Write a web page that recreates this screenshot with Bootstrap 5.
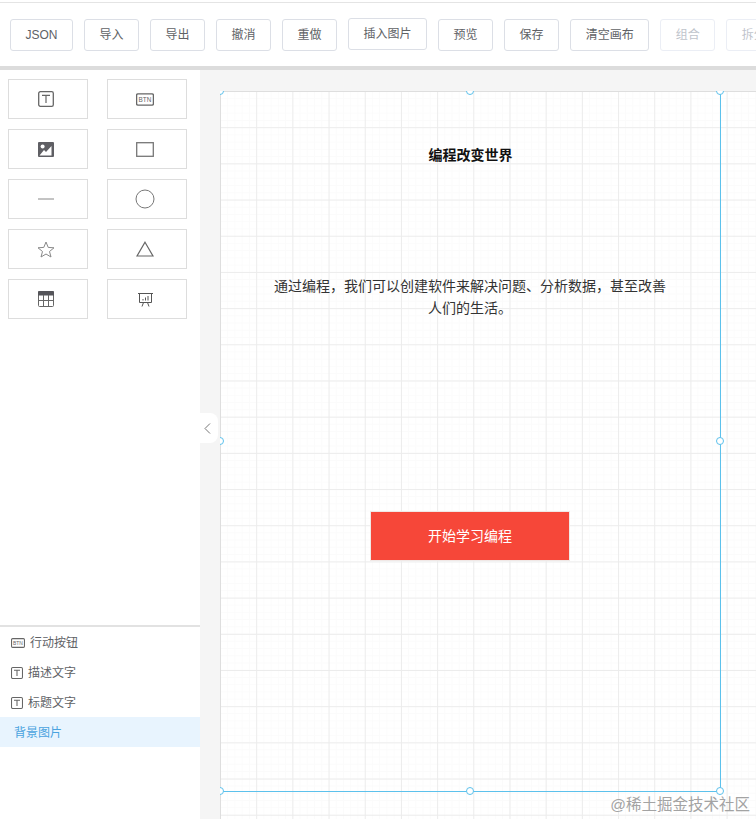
<!DOCTYPE html>
<html lang="zh-CN">
<head>
  <meta charset="UTF-8">
  <title>画布编辑器</title>
  <link href="https://cdn.jsdelivr.net/npm/bootstrap@5.3.0/dist/css/bootstrap.min.css" rel="stylesheet">
  <style>
    html, body {
      height: 100%;
    }
    body {
      overflow: hidden;
      font-family: "Liberation Sans", "Noto Sans CJK SC", sans-serif;
      font-size: 12px;
      color: #606266;
    }
    .top-bar {
      height: 70px;
      padding: 19px 0 0 10px;
      gap: 11px;
      background: linear-gradient(#e4e4e4, #e4e4e4) 0 2px / 100% 1px no-repeat #fff;
      border-bottom: 4px solid #dcdcdc;
      overflow: hidden;
    }
    .top-bar .btn {
      flex: none;
      height: 32px;
      padding: 1px 14.5px 0;
      font-size: 12px;
      line-height: 29px;
      color: #606266;
      background: #fff;
      border: 1px solid #dcdfe6;
      border-radius: 3px;
    }
    .top-bar .btn:disabled {
      color: #c0c4cc;
      border-color: #ebeef5;
      opacity: 1;
    }
    .top-bar .btn.btn-up {
      margin-top: -1px;
    }
    .main-row {
      height: 749px;
    }
    .side-panel {
      width: 200px;
      flex: none;
      background: #fff;
    }
    .shape-grid {
      display: grid;
      grid-template-columns: 80px 80px;
      grid-auto-rows: 40px;
      column-gap: 19px;
      row-gap: 10px;
      padding: 9px 0 0 8px;
    }
    .shape-cell {
      border: 1px solid #ddd;
      padding-right: 4px;
    }
    .shape-cell svg, .layer-row svg {
      color: #666;
    }
    .layer-list {
      border-top: 2px solid #e2e2e2;
      padding-bottom: 72px;
    }
    .layer-row {
      height: 30px;
      padding: 1px 0 0 11px;
      font-size: 12px;
      color: #606266;
      gap: 5px;
    }
    .layer-row.is-active {
      padding-left: 14px;
      background: #e8f4fe;
      color: #4aa3df;
    }
    .work-area {
      position: relative;
      background: #f5f5f5;
      padding: 21px 0 0 20px;
      overflow: hidden;
    }
    .side-toggle {
      position: absolute;
      left: 0;
      top: 343px;
      width: 18px;
      height: 30px;
      padding-right: 4px;
      background: #fff;
      border-radius: 0 8px 8px 0;
    }
    .sheet {
      position: relative;
      width: 640px;
      height: 800px;
      overflow: hidden;
      background-color: #fff;
      background-image:
        linear-gradient(to right, #ececec 1px, transparent 1px),
        linear-gradient(to bottom, #ececec 1px, transparent 1px),
        linear-gradient(to right, #fbfbfb 1px, transparent 1px),
        linear-gradient(to bottom, #fbfbfb 1px, transparent 1px);
      background-size: 36.2px 36.2px, 36.2px 36.2px, 7.24px 7.24px, 7.24px 7.24px;
      box-shadow: inset 1px 1px 0 #dedede;
    }
    .sel-right {
      position: absolute;
      left: 500px;
      top: 0;
      width: 1px;
      height: 700px;
      background: #5cc1ec;
    }
    .sel-bottom {
      position: absolute;
      left: 0;
      top: 700px;
      width: 501px;
      height: 1px;
      background: #5cc1ec;
    }
    .sel-dot {
      position: absolute;
      width: 8px;
      height: 8px;
      margin: -4px 0 0 -4px;
      background: #fff;
      border: 1px solid #5cc1ec;
      border-radius: 50%;
    }
    .sheet-title {
      position: absolute;
      left: 0;
      top: 53px;
      width: 501px;
      text-align: center;
      font-size: 14px;
      line-height: 22px;
      font-weight: 700;
      color: #111;
    }
    .sheet-desc {
      position: absolute;
      left: 50px;
      top: 184px;
      width: 400px;
      text-align: center;
      font-size: 14px;
      line-height: 22px;
      color: #333;
    }
    .sheet-btn {
      position: absolute;
      left: 151px;
      top: 421px;
      width: 198px;
      height: 48px;
      font-size: 14px;
      background: #f64739;
      color: #fff;
      box-shadow: 0 0 0 1px #f0e8e6;
    }
    .watermark {
      position: absolute;
      right: 6px;
      bottom: 3px;
      font-size: 15.5px;
      line-height: 22px;
      color: #a3a3a3;
    }
  </style>
</head>
<body>
  <!-- toolbar -->
  <div class="top-bar d-flex align-items-start">
    <button class="btn" type="button">JSON</button>
    <button class="btn" type="button">导入</button>
    <button class="btn" type="button">导出</button>
    <button class="btn" type="button">撤消</button>
    <button class="btn" type="button">重做</button>
    <button class="btn btn-up" type="button">插入图片</button>
    <button class="btn" type="button">预览</button>
    <button class="btn" type="button">保存</button>
    <button class="btn" type="button">清空画布</button>
    <button class="btn" type="button" disabled>组合</button>
    <button class="btn" type="button" disabled>拆分</button>
  </div>

  <div class="main-row d-flex">
    <!-- left panel -->
    <div class="side-panel d-flex flex-column justify-content-between">
      <div class="shape-grid">
        <div class="shape-cell d-flex align-items-center justify-content-center">
          <svg width="16" height="16" viewBox="0 0 16 16">
            <rect x="0.7" y="0.7" width="14.6" height="14.6" rx="1.6" fill="none" stroke="currentColor" stroke-width="1.3"/>
            <path d="M4 4.3h8M8 4.3v7.6" fill="none" stroke="currentColor" stroke-width="1.2"/>
          </svg>
        </div>
        <div class="shape-cell d-flex align-items-center justify-content-center">
          <svg width="18" height="13" viewBox="0 0 18 13">
            <rect x="0.6" y="0.8" width="16.8" height="11.4" rx="1.4" fill="none" stroke="currentColor" stroke-width="1.3"/>
            <text x="9" y="9.2" text-anchor="middle" font-size="6.4" font-family="Liberation Sans, sans-serif" fill="currentColor">BTN</text>
          </svg>
        </div>
        <div class="shape-cell d-flex align-items-center justify-content-center">
          <svg width="16" height="15" viewBox="0 0 16 15">
            <rect width="16" height="15" rx="1" fill="#5f5f64"/>
            <circle cx="4.6" cy="4.6" r="2" fill="#fff"/>
            <path d="M1.5 13.5 L6 8 L8 10 L13.5 4 V13.5 Z" fill="#fff"/>
          </svg>
        </div>
        <div class="shape-cell d-flex align-items-center justify-content-center">
          <svg width="18" height="15" viewBox="0 0 18 15"><rect x="0.7" y="0.7" width="16.6" height="13.6" fill="none" stroke="#777" stroke-width="1.3"/></svg>
        </div>
        <div class="shape-cell d-flex align-items-center justify-content-center">
          <svg width="16" height="2" viewBox="0 0 16 2"><path d="M0 1h16" stroke="#888" stroke-width="1"/></svg>
        </div>
        <div class="shape-cell d-flex align-items-center justify-content-center">
          <svg width="20" height="20" viewBox="0 0 20 20"><circle cx="10" cy="10" r="9" fill="none" stroke="#777" stroke-width="1"/></svg>
        </div>
        <div class="shape-cell d-flex align-items-center justify-content-center">
          <svg width="18" height="17" viewBox="0 0 18 17"><path d="M9 1 L11.2 6.4 L17 6.8 L12.5 10.5 L14 16 L9 13 L4 16 L5.5 10.5 L1 6.8 L6.8 6.4 Z" fill="none" stroke="#888" stroke-width="1"/></svg>
        </div>
        <div class="shape-cell d-flex align-items-center justify-content-center">
          <svg width="18" height="16" viewBox="0 0 18 16"><path d="M9 1.2 L17 15 H1 Z" fill="none" stroke="#666" stroke-width="1.2"/></svg>
        </div>
        <div class="shape-cell d-flex align-items-center justify-content-center">
          <svg width="16" height="16" viewBox="0 0 16 16">
            <rect x="0.5" y="0.5" width="15" height="15" rx="1" fill="none" stroke="#666"/>
            <path d="M1 0h14a1 1 0 0 1 1 1v3.5H0V1a1 1 0 0 1 1-1z" fill="#55555a"/>
            <path d="M5.5 4v11M10.5 4v11M0 9.5h16" stroke="#666" fill="none"/>
          </svg>
        </div>
        <div class="shape-cell d-flex align-items-center justify-content-center">
          <svg width="15" height="15" viewBox="0 0 15 15" fill="none" stroke="#555">
            <path d="M0 1.5h15M1.5 1.5v9h12v-9M5.5 10.5L4 14.5M9.5 10.5L11 14.5"/>
            <path d="M5 8.5v-1.5M7.5 8.5v-3M10 8.5v-4.5"/>
          </svg>
        </div>
      </div>

      <div class="layer-list">
        <div class="layer-row d-flex align-items-center">
          <svg width="14" height="10" viewBox="0 0 18 13">
            <rect x="0.6" y="0.8" width="16.8" height="11.4" rx="1.4" fill="none" stroke="currentColor" stroke-width="1.4"/>
            <text x="9" y="9.2" text-anchor="middle" font-size="6.4" font-family="Liberation Sans, sans-serif" fill="currentColor">BTN</text>
          </svg><span>行动按钮</span>
        </div>
        <div class="layer-row d-flex align-items-center">
          <svg width="12" height="12" viewBox="0 0 16 16">
            <rect x="0.7" y="0.7" width="14.6" height="14.6" rx="1.6" fill="none" stroke="currentColor" stroke-width="1.4"/>
            <path d="M4 4.3h8M8 4.3v7.6" fill="none" stroke="currentColor" stroke-width="1.4"/>
          </svg><span>描述文字</span>
        </div>
        <div class="layer-row d-flex align-items-center">
          <svg width="12" height="12" viewBox="0 0 16 16">
            <rect x="0.7" y="0.7" width="14.6" height="14.6" rx="1.6" fill="none" stroke="currentColor" stroke-width="1.4"/>
            <path d="M4 4.3h8M8 4.3v7.6" fill="none" stroke="currentColor" stroke-width="1.4"/>
          </svg><span>标题文字</span>
        </div>
        <div class="layer-row is-active d-flex align-items-center">背景图片</div>
      </div>
    </div>

    <!-- canvas -->
    <div class="work-area flex-grow-1">
      <div class="side-toggle d-flex align-items-center justify-content-center">
        <svg width="7" height="11" viewBox="0 0 7 11"><path d="M6 0.5 L1 5.5 L6 10.5" fill="none" stroke="#777" stroke-width="1"/></svg>
      </div>
      <div class="sheet">
        <div class="sheet-title">编程改变世界</div>
        <div class="sheet-desc">通过编程，我们可以创建软件来解决问题、分析数据，甚至改善人们的生活。</div>
        <div class="sheet-btn d-flex align-items-center justify-content-center">开始学习编程</div>
        <div class="sel-right"></div>
        <div class="sel-bottom"></div>
        <span class="sel-dot" style="left: 0; top: 0"></span>
        <span class="sel-dot" style="left: 250px; top: 0"></span>
        <span class="sel-dot" style="left: 500px; top: 0"></span>
        <span class="sel-dot" style="left: 0; top: 350px"></span>
        <span class="sel-dot" style="left: 500px; top: 350px"></span>
        <span class="sel-dot" style="left: 0; top: 700px"></span>
        <span class="sel-dot" style="left: 250px; top: 700px"></span>
        <span class="sel-dot" style="left: 500px; top: 700px"></span>
      </div>
      <div class="watermark">@稀土掘金技术社区</div>
    </div>
  </div>

  <script src="https://cdn.jsdelivr.net/npm/bootstrap@5.3.0/dist/js/bootstrap.bundle.min.js"></script>
</body>
</html>
